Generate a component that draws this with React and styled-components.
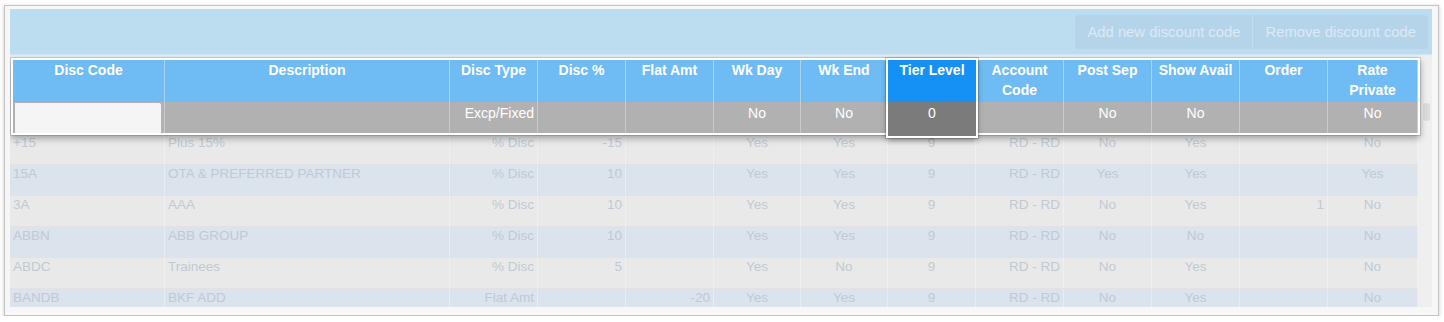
import React from 'react'
import styled, { createGlobalStyle } from 'styled-components'

const columns = [
    { key: 'code', label: 'Disc Code', width: 155, align: 'left' },
    { key: 'desc', label: 'Description', width: 285, align: 'left' },
    { key: 'type', label: 'Disc Type', width: 88, align: 'right', filter: 'Excp/Fixed' },
    { key: 'pct', label: 'Disc %', width: 88, align: 'right' },
    { key: 'flat', label: 'Flat Amt', width: 88, align: 'right' },
    { key: 'wkday', label: 'Wk Day', width: 87, align: 'center', filter: 'No' },
    { key: 'wkend', label: 'Wk End', width: 87, align: 'center', filter: 'No' },
    { key: 'tier', label: 'Tier Level', width: 88, align: 'center', filter: '0', focus: true },
    { key: 'acct', label: 'Account\nCode', width: 88, align: 'right' },
    { key: 'post', label: 'Post Sep', width: 88, align: 'center', filter: 'No' },
    { key: 'avail', label: 'Show Avail', width: 88, align: 'center', filter: 'No' },
    { key: 'order', label: 'Order', width: 88, align: 'right' },
    { key: 'priv', label: 'Rate\nPrivate', width: 90, align: 'center', filter: 'No' },
]

const rows = [
    ['+15', 'Plus 15%', '% Disc', '-15', '', 'Yes', 'Yes', '9', 'RD - RD', 'No', 'Yes', '', 'No'],
    ['15A', 'OTA & PREFERRED PARTNER', '% Disc', '10', '', 'Yes', 'Yes', '9', 'RD - RD', 'Yes', 'Yes', '', 'Yes'],
    ['3A', 'AAA', '% Disc', '10', '', 'Yes', 'Yes', '9', 'RD - RD', 'No', 'Yes', '1', 'No'],
    ['ABBN', 'ABB GROUP', '% Disc', '10', '', 'Yes', 'Yes', '9', 'RD - RD', 'No', 'No', '', 'No'],
    ['ABDC', 'Trainees', '% Disc', '5', '', 'Yes', 'No', '9', 'RD - RD', 'No', 'Yes', '', 'No'],
    ['BANDB', 'BKF ADD', 'Flat Amt', '', '-20', 'Yes', 'Yes', '9', 'RD - RD', 'No', 'Yes', '', 'No'],
]

const gridCols = columns.map((c) => c.width + 'px').join(' ')

const App = () => {
    return (
        <>
            <GlobalStyle />
            <Window>
                <Toolbar>
                    <ButtonGroup>
                        <ToolButton>Add new discount code</ToolButton>
                        <ToolButton $divider>Remove discount code</ToolButton>
                    </ButtonGroup>
                </Toolbar>
                <Body>
                    <Table>
                        <HeadArea>
                            <Spotlight>
                                {columns.map((col, i) => (
                                    <Column key={col.key} $focus={col.focus} $width={i === 0 ? col.width - 3 : col.width}>
                                        <HeadCell $focus={col.focus}>{col.label}</HeadCell>
                                        <FilterCell $focus={col.focus} $align={col.align} $input={i === 0}>
                                            {i === 0 ? <FilterInput type="text" /> : col.filter}
                                        </FilterCell>
                                    </Column>
                                ))}
                            </Spotlight>
                        </HeadArea>
                        {rows.map((row, r) => (
                            <Row key={row[0]} $alt={r % 2 === 1}>
                                {row.map((val, c) => (
                                    <Cell key={columns[c].key} $align={columns[c].align}>{val}</Cell>
                                ))}
                            </Row>
                        ))}
                    </Table>
                    <ScrollTrack>
                        <Thumb />
                    </ScrollTrack>
                </Body>
            </Window>
        </>
    )
}

export default App


const GlobalStyle = createGlobalStyle`
    html, body{
        margin: 0;
        background: #ffffff;
        font-family: "Liberation Sans", Arial, sans-serif;
    }
    *{
        box-sizing: border-box;
    }
`;

const Window = styled.div`
    margin: 5px 0 0 4px;
    width: 1435px;
    height: 311px;
    padding: 3px 6px 0 5px;
    background: #f7f7f7;
    border: 1px solid #c4c4c4;
    box-shadow: 0 1px 4px rgba(0, 0, 0, 0.22);
`;

const Toolbar = styled.div`
    height: 46px;
    display: flex;
    justify-content: flex-end;
    align-items: center;
    padding-right: 4px;
    background: #bcdcf0;
    border-bottom: 1px solid #d2e5f2;
`;

const ButtonGroup = styled.div`
    display: flex;
    height: 34px;
    margin-top: 1px;
    background: #b5d4ea;
    border-radius: 4px;
`;

const ToolButton = styled.button`
    height: 100%;
    padding: 0 12px;
    border: none;
    border-left: ${(p) => (p.$divider ? '1px solid #c6dcec' : 'none')};
    background: transparent;
    color: #dde9f3;
    font-family: "Liberation Sans", Arial, sans-serif;
    font-size: 14.8px;
`;

const Body = styled.div`
    display: flex;
    height: 252px;
    overflow: hidden;
`;

const Table = styled.div`
    width: 1408px;
    background: #f1f1f1;
`;

const HeadArea = styled.div`
    height: 78px;
    padding: 5px 0 0 3px;
    background: #e6eef5;
`;

const Spotlight = styled.div`
    position: relative;
    z-index: 2;
    display: flex;
    align-items: flex-start;
    width: 1405px;
    height: 73px;
    box-shadow: 0 0 0 2px #ffffff, 0 0 0 3px rgba(0, 0, 0, 0.12), 0 3px 7px 2px rgba(0, 0, 0, 0.35);
`;

const Column = styled.div`
    display: flex;
    flex-direction: column;
    flex: none;
    width: ${(p) => p.$width}px;
    position: ${(p) => (p.$focus ? 'relative' : 'static')};
    z-index: ${(p) => (p.$focus ? 3 : 'auto')};
    box-shadow: ${(p) => (p.$focus ? '0 0 0 2px #ffffff, 0 0 0 3px rgba(0,0,0,0.15), 0 3px 6px 1px rgba(0,0,0,0.4)' : 'none')};
`;

const HeadCell = styled.div`
    height: 42px;
    padding: 0 3px;
    background: ${(p) => (p.$focus ? '#1591f5' : '#6fbbf3')};
    border-right: ${(p) => (p.$focus ? 'none' : '1px solid #a9d4f5')};
    color: #ffffff;
    font-size: 14px;
    font-weight: bold;
    line-height: 20px;
    text-align: center;
    white-space: pre-line;
`;

const FilterCell = styled.div`
    height: ${(p) => (p.$focus ? '34px' : '31px')};
    padding: ${(p) => (p.$input ? '0 2px 0 2px' : '2px 3px 0')};
    background: ${(p) => (p.$focus ? '#7b7b7b' : '#b1b1b1')};
    border-right: ${(p) => (p.$focus ? 'none' : '1px solid #cbcbcb')};
    color: #ffffff;
    font-size: 14px;
    line-height: 18px;
    text-align: ${(p) => (p.$focus ? 'center' : p.$align)};
`;

const FilterInput = styled.input`
    display: block;
    width: 100%;
    height: 30px;
    margin: 1px 0 0 0;
    padding: 0;
    border: none;
    border-right: 1px solid #9fb9d6;
    border-radius: 0 3px 0 0;
    background: #f5f5f5;
    outline: none;
`;

const Row = styled.div`
    display: grid;
    grid-template-columns: ${gridCols};
    height: 31px;
    background: ${(p) => (p.$alt ? '#dbe3ec' : '#e9e9e9')};
    border-top: 1px solid #e2e2e2;
`;

const Cell = styled.div`
    padding: 1px 3px 0;
    border-right: 1px solid rgba(255, 255, 255, 0.35);
    color: #c0c9d5;
    font-size: 13.5px;
    line-height: 16px;
    text-align: ${(p) => p.$align};
    white-space: nowrap;
    overflow: hidden;
`;

const ScrollTrack = styled.div`
    width: 14px;
    padding: 48px 2px 0 5px;
    background: #efefef;
`;

const Thumb = styled.div`
    width: 7px;
    height: 18px;
    border-radius: 4px;
    background: #dcdcdc;
`;
